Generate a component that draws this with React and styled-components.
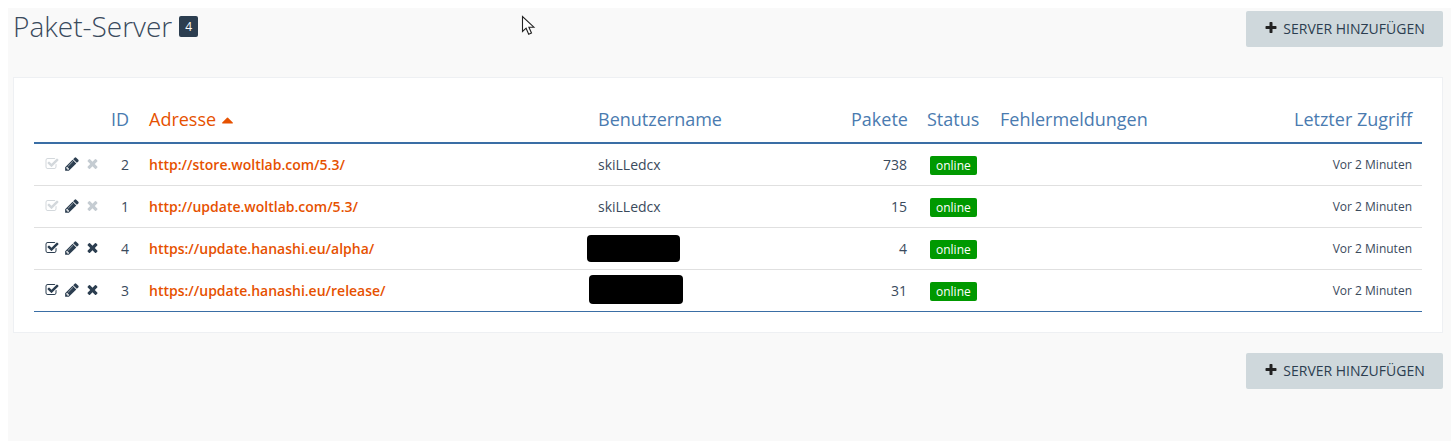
import React from "react";
import styled, { createGlobalStyle } from "styled-components";

const GlobalStyle = createGlobalStyle`
  html, body {
    margin: 0;
    padding: 0;
    background: #fff;
  }
  body {
    padding: 8px 0 0 8px;
    font-family: "Open Sans", "Noto Sans", sans-serif;
    color: #3a4a5c;
  }
`;

const ICONS = {
  check:
    "M1472 930v318q0 119-84.5 203.5t-203.5 84.5h-832q-119 0-203.5-84.5t-84.5-203.5v-832q0-119 84.5-203.5t203.5-84.5h832q63 0 117 25 15 7 18 23 3 17-9 29l-49 49q-10 10-23 10-3 0-9-2-23-6-45-6h-832q-66 0-113 47t-47 113v832q0 66 47 113t113 47h832q66 0 113-47t47-113v-254q0-13 9-22l64-64q10-10 23-10 6 0 12 3 20 8 20 29zm231-489l-814 814q-24 24-57 24t-57-24l-430-430q-24-24-24-57t24-57l110-110q24-24 57-24t57 24l263 263 647-647q24-24 57-24t57 24l110 110q24 24 24 57t-24 57z",
  pencil:
    "M491 1536l91-91-235-235-91 91v107h128v128h107zm523-928q0-22-22-22-10 0-17 7l-542 542q-7 7-7 17 0 22 22 22 10 0 17-7l542-542q7-7 7-17zm-54-192l416 416-832 832h-416v-416zm683 96q0 53-37 90l-166 166-416-416 166-165q36-38 90-38 53 0 91 38l235 234q37 39 37 91z",
  times:
    "M1490 1322q0 40-28 68l-136 136q-28 28-68 28t-68-28l-294-294-294 294q-28 28-68 28t-68-28l-136-136q-28-28-28-68t28-68l294-294-294-294q-28-28-28-68t28-68l136-136q28-28 68-28t68 28l294 294 294-294q28-28 68-28t68 28l136 136q28 28 28 68t-28 68l-294 294 294 294q28 28 28 68z",
  plus:
    "M1600 736v192q0 40-28 68t-68 28h-416v416q0 40-28 68t-68 28h-192q-40 0-68-28t-28-68v-416h-416q-40 0-68-28t-28-68v-192q0-40 28-68t68-28h416v-416q0-40 28-68t68-28h192q40 0 68 28t28 68v416h416q40 0 68 28t28 68z",
  caret:
    "M1408 1216q0 26-19 45t-45 19h-896q-26 0-45-19t-19-45 19-45l448-448q19-19 45-19t45 19l448 448q19 19 19 45z",
};

const Icon = ({ name, size = 14, className }) => (
  <svg className={className} width={size} height={size} viewBox="0 0 1792 1792" fill="currentColor">
    <path d={ICONS[name]} />
  </svg>
);

const servers = [
  { id: 2, url: "http://store.woltlab.com/5.3/", user: "skiLLedcx", packages: 738, locked: true },
  { id: 1, url: "http://update.woltlab.com/5.3/", user: "skiLLedcx", packages: 15, locked: true },
  { id: 4, url: "https://update.hanashi.eu/alpha/", mask: { left: -1, top: 7, width: 93, height: 27 }, packages: 4 },
  { id: 3, url: "https://update.hanashi.eu/release/", mask: { left: 1, top: 5, width: 94, height: 29 }, packages: 31 },
];

const AddServerButton = () => (
  <AddButton>
    <Icon name="plus" size={14} />
    SERVER HINZUFÜGEN
  </AddButton>
);

export default function App() {
  return (
    <Page>
      <GlobalStyle />
      <Cursor width="16" height="22" viewBox="0 0 16 22">
        <path d="M1.5 1.5v15l3.6-3.3 2.6 6 2.8-1.2-2.6-5.8h5z" fill="#fff" stroke="#222" strokeWidth="1.1" />
      </Cursor>
      <Header>
        <TitleRow>
          <Title>Paket-Server</Title>
          <Badge>4</Badge>
        </TitleRow>
        <AddServerButton />
      </Header>
      <Card>
        <Table>
          <colgroup>
            <Col $w={67} />
            <Col $w={38} />
            <Col $w={449} />
            <Col $w={253} />
            <Col $w={76} />
            <Col $w={73} />
            <Col $w={294} />
            <Col $w={138} />
          </colgroup>
          <thead>
            <tr>
              <Th />
              <Th $right>ID</Th>
              <Th $active>
                Adresse <Caret name="caret" size={19} />
              </Th>
              <Th>Benutzername</Th>
              <Th $right>Pakete</Th>
              <Th>Status</Th>
              <Th>Fehlermeldungen</Th>
              <Th $right>Letzter Zugriff</Th>
            </tr>
          </thead>
          <tbody>
            {servers.map((s) => (
              <Row key={s.id}>
                <ActionCell>
                  <Actions>
                    <CheckIcon name="check" size={14} $muted={s.locked} />
                    <ActionIcon name="pencil" size={16} />
                    <ActionIcon name="times" size={15} $muted={s.locked} />
                  </Actions>
                </ActionCell>
                <Td $right>{s.id}</Td>
                <Td>
                  <ServerLink href="#">{s.url}</ServerLink>
                </Td>
                <UserCell>
                  {s.mask ? (
                    <Redaction $left={s.mask.left} $top={s.mask.top} $width={s.mask.width} $height={s.mask.height} />
                  ) : (
                    s.user
                  )}
                </UserCell>
                <Td $right>{s.packages}</Td>
                <Td>
                  <StatusBadge>online</StatusBadge>
                </Td>
                <Td />
                <TimeCell>Vor 2 Minuten</TimeCell>
              </Row>
            ))}
          </tbody>
        </Table>
      </Card>
      <Footer>
        <AddServerButton />
      </Footer>
    </Page>
  );
}

const Page = styled.div`
  position: relative;
  box-sizing: border-box;
  min-height: 433px;
  padding: 3px 8px 0 5px;
  background: #f9f9f9;
`;

const Cursor = styled.svg`
  position: absolute;
  left: 513px;
  top: 7px;
`;

const Header = styled.header`
  display: flex;
  justify-content: space-between;
  align-items: flex-start;
  margin-bottom: 30px;
`;

const TitleRow = styled.div`
  display: flex;
  align-items: center;
  gap: 7px;
  height: 30px;
`;

const Title = styled.h1`
  margin: 0;
  font-size: 28px;
  line-height: 30px;
  font-weight: 300;
  color: #3a4a5c;
`;

const Badge = styled.span`
  display: inline-block;
  width: 19px;
  height: 21px;
  border-radius: 2px;
  background: #2c3e50;
  color: #fff;
  font-size: 12px;
  line-height: 21px;
  text-align: center;
`;

const AddButton = styled.button`
  display: flex;
  align-items: center;
  justify-content: center;
  gap: 5px;
  width: 197px;
  height: 36px;
  padding: 0 0 2px;
  border: 0;
  border-radius: 2px;
  background: #cfd8dc;
  color: #2c3e50;
  font-family: inherit;
  font-size: 14px;

  svg {
    color: #222;
  }
`;

const Card = styled.section`
  box-sizing: border-box;
  height: 256px;
  padding: 20px;
  border: 1px solid #eef0f3;
  background: #fff;
`;

const Table = styled.table`
  width: 1388px;
  table-layout: fixed;
  border-collapse: collapse;
  border-bottom: 1px solid #3a6ea5;
`;

const Col = styled.col`
  width: ${({ $w }) => $w}px;
`;

const Th = styled.th`
  height: 42px;
  padding: 0 10px 2px;
  border-bottom: 2px solid #3a6ea5;
  font-size: 18px;
  font-weight: 400;
  white-space: nowrap;
  text-align: ${({ $right }) => ($right ? "right" : "left")};
  color: ${({ $active }) => ($active ? "#e65100" : "#4a7bb0")};
`;

const Caret = styled(Icon)`
  vertical-align: -3px;
  margin-left: -3px;
`;

const Row = styled.tr`
  height: 42px;
  border-bottom: 1px solid #e0e0e0;

  &:last-child {
    border-bottom: 0;
  }
`;

const Td = styled.td`
  padding: 0 10px;
  font-size: 14px;
  white-space: nowrap;
  text-align: ${({ $right }) => ($right ? "right" : "left")};
`;

const ActionCell = styled(Td)`
  padding-left: 11px;
`;

const Actions = styled.div`
  display: flex;
  align-items: center;
  gap: 5px;
  margin-top: -1px;
`;

const ActionIcon = styled(Icon)`
  flex: none;
  color: ${({ $muted }) => ($muted ? "#c5ccd2" : "#2c3e50")};
`;

const CheckIcon = styled(ActionIcon)`
  color: ${({ $muted }) => ($muted ? "#d3d8dc" : "#2c3e50")};
`;

const ServerLink = styled.a`
  color: #e65100;
  font-weight: 600;
  font-size: 14px;
  text-decoration: none;
`;

const UserCell = styled(Td)`
  position: relative;
`;

const Redaction = styled.span`
  position: absolute;
  left: ${({ $left }) => $left}px;
  top: ${({ $top }) => $top}px;
  width: ${({ $width }) => $width}px;
  height: ${({ $height }) => $height}px;
  border-radius: 4px;
  background: #000;
`;

const StatusBadge = styled.span`
  display: inline-block;
  margin-left: 3px;
  padding: 0 6px;
  height: 19px;
  border-radius: 2px;
  background: #009900;
  color: #fff;
  font-size: 12px;
  line-height: 20px;
  vertical-align: -2px;
`;

const TimeCell = styled(Td)`
  font-size: 12px;
  text-align: right;
`;

const Footer = styled.footer`
  display: flex;
  justify-content: flex-end;
  margin-top: 20px;
`;
